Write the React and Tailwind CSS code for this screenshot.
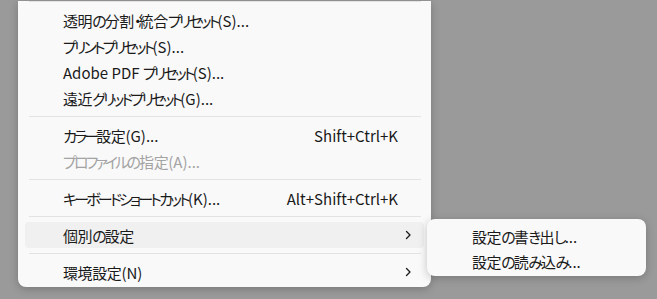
import React from "react";

const font = {
  fontFamily: '"Noto Sans CJK JP", "Noto Sans", sans-serif',
};

function J({ text }) {
  const parts = text.match(/[\u30A0-\u30FF]+|[\u3040-\u309F]+|[\u4E00-\u9FFF]+|[^\u3040-\u30FF\u4E00-\u9FFF]+/g) || [];
  return (
    <>
      {parts.map((p, i) => {
        let cls = "";
        if (/^[\u30A0-\u30FF]/.test(p)) cls = "tracking-[-2.8px]";
        else if (/^[\u3040-\u309F]/.test(p)) cls = "tracking-[-2px]";
        else if (/^[\u4E00-\u9FFF]/.test(p)) cls = "tracking-[-0.4px]";
        return (
          <span key={i} className={cls}>
            {p}
          </span>
        );
      })}
    </>
  );
}

function Chevron() {
  return (
    <svg width="7" height="10" viewBox="0 0 7 10" className="block">
      <polyline points="1.5,1.5 5,5 1.5,8.5" fill="none" stroke="#1a1a1a" strokeWidth="1.3" strokeLinecap="round" strokeLinejoin="round" />
    </svg>
  );
}

function Sep({ first }) {
  return <div className={`h-px bg-[#e3e3e3] ml-[4px] mr-[3px] ${first ? "mt-[1px] mb-[5px]" : "my-[5px]"}`} />;
}

function Row({ label, shortcut, sub, disabled, active }) {
  return (
    <div className={`flex items-center h-[26px] rounded-[4px] pl-[38px] ${active ? "bg-[#f0f0f0]" : ""}`}>
      <span className={`flex-1 whitespace-nowrap ${disabled ? "text-[#a3a3a3]" : "text-[#1a1a1a]"}`}>
        <J text={label} />
      </span>
      {shortcut && <span className="whitespace-nowrap text-[#1a1a1a]">{shortcut}</span>}
      <span className="w-[26px] flex items-center pl-[7px]">{sub && <Chevron />}</span>
    </div>
  );
}

export default function App() {
  return (
    <div
      className="relative w-[657px] h-[299px] overflow-hidden bg-[#9a9a9a] text-[15px] leading-none [font-feature-settings:'palt']"
      style={font}
    >
      <div className="ml-[18px] w-[413px] bg-[#f9f9f9] rounded-b-[8px] px-[7px] pb-[2px] shadow-[0_2px_8px_rgba(0,0,0,0.22)]">
        <Sep first />
        <Row label="透明の分割・統合プリセット(S)..." />
        <Row label="プリントプリセット(S)..." />
        <Row label="Adobe PDF プリセット(S)..." />
        <Row label="遠近グリッドプリセット(G)..." />
        <Sep />
        <Row label="カラー設定(G)..." shortcut="Shift+Ctrl+K" />
        <Row label="プロファイルの指定(A)..." disabled />
        <Sep />
        <Row label="キーボードショートカット(K)..." shortcut="Alt+Shift+Ctrl+K" />
        <Sep />
        <Row label="個別の設定" sub active />
        <Sep />
        <Row label="環境設定(N)" sub />
      </div>
      <div className="absolute left-[427px] top-[219px] w-[219px] h-[57px] rounded-[8px] bg-[#f9f9f9] pt-[5px] shadow-[0_2px_8px_rgba(0,0,0,0.22)]">
        <div className="flex items-center h-[25px] pl-[45px] text-[#1a1a1a] whitespace-nowrap">
          <J text="設定の書き出し..." />
        </div>
        <div className="flex items-center h-[25px] pl-[45px] text-[#1a1a1a] whitespace-nowrap">
          <J text="設定の読み込み..." />
        </div>
      </div>
    </div>
  );
}
